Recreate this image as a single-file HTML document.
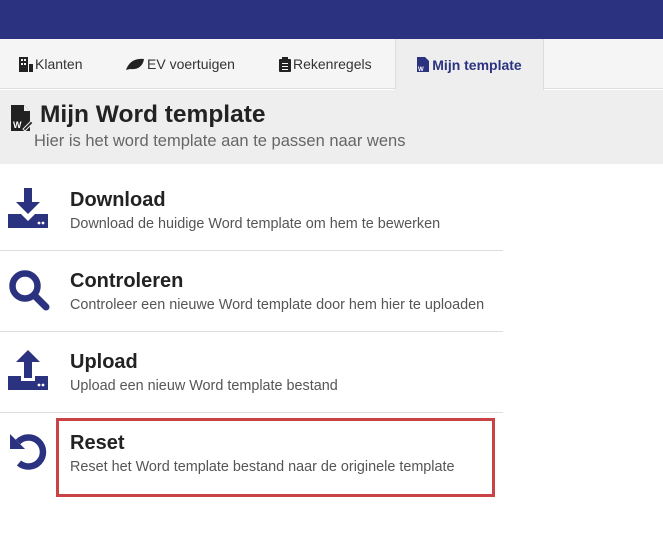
<!DOCTYPE html>
<html><head><meta charset="utf-8"><style>
*{margin:0;padding:0;box-sizing:border-box}
body{width:663px;height:534px;overflow:hidden;background:#fff;font-family:"Liberation Sans",sans-serif;color:#222;position:relative}
.top{position:absolute;left:0;top:0;width:663px;height:39px;background:#2b3380}
.tabs{position:absolute;left:0;top:39px;width:663px;height:50px;background:#f5f5f5;border-bottom:1px solid #ddd}
.tab{position:absolute;top:0;height:50px;line-height:52px;font-size:14px;color:#333;display:flex;align-items:center}
.tab svg{margin-right:2px}
.act{left:395px;width:149px;background:#eeeeee;border-left:1px solid #ddd;border-right:1px solid #ddd;height:51px;color:#2b3380;font-weight:bold;justify-content:center}
.hdr{position:absolute;left:0;top:90px;width:663px;height:74px;background:#eeeeee}
.hdr h1{position:absolute;left:40px;top:11px;font-size:24.5px;font-weight:bold;color:#222}
.hdr p{position:absolute;left:34px;top:42px;font-size:16.5px;color:#666}
.row{position:absolute;left:0;width:503px;height:81px;border-bottom:1px solid #ddd}
.row h2{position:absolute;left:70px;top:19px;font-size:20px;font-weight:bold;color:#222}
.row p{position:absolute;left:70px;top:46px;font-size:14.4px;color:#555}
.row svg{position:absolute;left:8px;top:18px}
.red{position:absolute;left:56px;top:418px;width:439px;height:79px;border:3px solid #c94345}
</style></head><body>
<div class="top"></div>
<div class="tabs">
 <div class="tab" style="left:19px"><svg width="14" height="15" viewBox="0 0 14 15"><rect x="0" y="0" width="9" height="15" fill="#222"/><rect x="2" y="2" width="2" height="2" fill="#f5f5f5"/><rect x="5" y="2" width="2" height="2" fill="#f5f5f5"/><rect x="2" y="6" width="2" height="2" fill="#f5f5f5"/><rect x="5" y="6" width="2" height="2" fill="#f5f5f5"/><rect x="10" y="7" width="4" height="8" fill="#222"/></svg>Klanten</div>
 <div class="tab" style="left:126px"><svg width="19" height="13" viewBox="0 0 19 13"><path d="M0 12 C3 3 10 0 18 1 C17 8 12 12 4 11 Z" fill="#222"/></svg>EV voertuigen</div>
 <div class="tab" style="left:279px"><svg width="12" height="15" viewBox="0 0 12 15"><rect x="0" y="2" width="12" height="13" rx="1" fill="#222"/><rect x="3" y="0" width="6" height="3" fill="#222"/><rect x="3" y="6" width="6" height="1" fill="#f5f5f5"/><rect x="3" y="9" width="6" height="1" fill="#f5f5f5"/><rect x="3" y="12" width="6" height="1" fill="#f5f5f5"/></svg>Rekenregels</div>
 <div class="tab act"><svg width="13" height="15" viewBox="0 0 13 15"><path d="M0 0H8L12 4V15H0Z" fill="#2b3380"/><text x="1" y="14" font-size="6" fill="#fff" font-family="Liberation Sans">W</text></svg>Mijn template</div>
</div>
<div class="hdr">
 <svg style="position:absolute;left:11px;top:15px" width="22" height="26" viewBox="0 0 22 26"><path d="M0 0H13L19 6V26H0Z" fill="#222"/><path d="M13 0V6H19" fill="#eee"/><text x="2" y="23" font-size="9" fill="#fff" font-weight="bold" font-family="Liberation Sans">W</text><path d="M12 24L20 16L22 18L14 26Z" fill="#222" stroke="#eee"/></svg>
 <h1>Mijn Word template</h1>
 <p>Hier is het word template aan te passen naar wens</p>
</div>
<div class="row" style="top:170px"><svg width="40" height="42" viewBox="0 0 40 42"><rect x="16" y="0" width="8" height="15" fill="#2b3380"/><path d="M8 14H32L20 26Z" fill="#2b3380"/><path d="M0 26H13L20 33L27 26H40V40H0Z" fill="#2b3380"/><circle cx="31" cy="35" r="1.4" fill="#fff"/><circle cx="35" cy="35" r="1.4" fill="#fff"/></svg><h2>Download</h2><p>Download de huidige Word template om hem te bewerken</p></div>
<div class="row" style="top:251px"><svg width="42" height="42" viewBox="0 0 42 42"><circle cx="17" cy="17" r="12.5" fill="none" stroke="#2b3380" stroke-width="6.5"/><path d="M27 27L38 38" stroke="#2b3380" stroke-width="7" stroke-linecap="round"/></svg><h2>Controleren</h2><p>Controleer een nieuwe Word template door hem hier te uploaden</p></div>
<div class="row" style="top:332px"><svg width="40" height="42" viewBox="0 0 40 42"><path d="M20 0L32 12H24V28H16V12H8Z" fill="#2b3380"/><path d="M0 26H13V31H27V26H40V40H0Z" fill="#2b3380"/><circle cx="31" cy="35" r="1.4" fill="#fff"/><circle cx="35" cy="35" r="1.4" fill="#fff"/></svg><h2>Upload</h2><p>Upload een nieuw Word template bestand</p></div>
<div class="row" style="top:413px;border-bottom:none"><svg width="40" height="42" viewBox="0 0 40 42"><path d="M10 11A14.5 14.5 0 1 1 11 32" fill="none" stroke="#2b3380" stroke-width="6.5"/><path d="M2 3V18H17Z" fill="#2b3380"/></svg><h2>Reset</h2><p>Reset het Word template bestand naar de originele template</p></div>
<div class="red"></div>
</body></html>
